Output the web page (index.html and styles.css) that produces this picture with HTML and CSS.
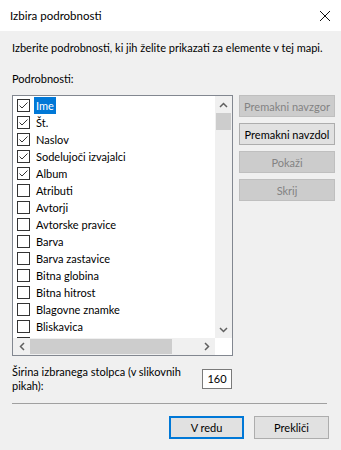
FILE: index.html
```html
<!DOCTYPE html>
<html>
<head>
<meta charset="utf-8">
<link rel="stylesheet" href="styles.css">
</head>
<body>
<div class="dialog">
  <div class="titlebar">
    <span class="title">Izbira podrobnosti</span>
    <svg class="close" width="12" height="12" viewBox="0 0 12 12"><path d="M1 1L11 11M11 1L1 11" stroke="#111" stroke-width="1" fill="none"/></svg>
  </div>
  <div class="content">
    <p class="desc">Izberite podrobnosti, ki jih želite prikazati za elemente v tej mapi.</p>
    <div class="label">Podrobnosti:</div>
    <div class="main">
      <div class="listbox">
        <div class="listarea">
          <div class="rows">
            <div class="row"><span class="cb on"><svg width="11" height="11" viewBox="0 0 11 11"><path d="M1.5 5.5L4 8L9.5 2.5" stroke="#333" stroke-width="1" fill="none"/></svg></span><span class="txt sel">Ime</span></div>
            <div class="row"><span class="cb on"><svg width="11" height="11" viewBox="0 0 11 11"><path d="M1.5 5.5L4 8L9.5 2.5" stroke="#333" stroke-width="1" fill="none"/></svg></span><span class="txt">Št.</span></div>
            <div class="row"><span class="cb on"><svg width="11" height="11" viewBox="0 0 11 11"><path d="M1.5 5.5L4 8L9.5 2.5" stroke="#333" stroke-width="1" fill="none"/></svg></span><span class="txt">Naslov</span></div>
            <div class="row"><span class="cb on"><svg width="11" height="11" viewBox="0 0 11 11"><path d="M1.5 5.5L4 8L9.5 2.5" stroke="#333" stroke-width="1" fill="none"/></svg></span><span class="txt">Sodelujoči izvajalci</span></div>
            <div class="row"><span class="cb on"><svg width="11" height="11" viewBox="0 0 11 11"><path d="M1.5 5.5L4 8L9.5 2.5" stroke="#333" stroke-width="1" fill="none"/></svg></span><span class="txt">Album</span></div>
            <div class="row"><span class="cb"></span><span class="txt">Atributi</span></div>
            <div class="row"><span class="cb"></span><span class="txt">Avtorji</span></div>
            <div class="row"><span class="cb"></span><span class="txt">Avtorske pravice</span></div>
            <div class="row"><span class="cb"></span><span class="txt">Barva</span></div>
            <div class="row"><span class="cb"></span><span class="txt">Barva zastavice</span></div>
            <div class="row"><span class="cb"></span><span class="txt">Bitna globina</span></div>
            <div class="row"><span class="cb"></span><span class="txt">Bitna hitrost</span></div>
            <div class="row"><span class="cb"></span><span class="txt">Blagovne znamke</span></div>
            <div class="row"><span class="cb"></span><span class="txt">Bliskavica</span></div>
            <div class="row"><span class="cb"></span></div>
          </div>
          <div class="vscroll">
            <div class="arrow"><svg width="9" height="6" viewBox="0 0 9 6"><path d="M1 5L4.5 1.5L8 5" stroke="#606060" stroke-width="1.5" fill="none"/></svg></div>
            <div class="vtrack"><div class="vthumb"></div></div>
            <div class="arrow"><svg width="9" height="6" viewBox="0 0 9 6"><path d="M1 1L4.5 4.5L8 1" stroke="#606060" stroke-width="1.5" fill="none"/></svg></div>
          </div>
        </div>
        <div class="hbar">
          <div class="hscroll">
            <div class="harrow"><svg width="6" height="9" viewBox="0 0 6 9"><path d="M5 1L1.5 4.5L5 8" stroke="#606060" stroke-width="1.5" fill="none"/></svg></div>
            <div class="htrack"><div class="hthumb"></div></div>
            <div class="harrow"><svg width="6" height="9" viewBox="0 0 6 9"><path d="M1 1L4.5 4.5L1 8" stroke="#606060" stroke-width="1.5" fill="none"/></svg></div>
          </div>
          <div class="corner"></div>
        </div>
      </div>
      <div class="side">
        <button class="btn dis">Premakni navzgor</button>
        <button class="btn">Premakni navzdol</button>
        <button class="btn dis">Pokaži</button>
        <button class="btn dis">Skrij</button>
      </div>
    </div>
    <div class="widthrow">
      <div class="wlabel">Širina izbranega stolpca (v slikovnih pikah):</div>
      <div class="winput">160</div>
    </div>
    <div class="sep"></div>
    <div class="footer">
      <button class="btn fbtn def">V redu</button>
      <button class="btn fbtn">Prekliči</button>
    </div>
  </div>
</div>
</body>
</html>
```

FILE: styles.css
```css
* { box-sizing: border-box; }
html, body { margin: 0; padding: 0; }
body {
  width: 341px;
  height: 450px;
  background: #f0f0f0;
  font-family: Lato, "Noto Sans", sans-serif;
  font-size: 11px;
  color: #000;
  overflow: hidden;
}
.dialog { width: 341px; height: 450px; }
.titlebar {
  height: 31px;
  background: #fff;
  display: flex;
  align-items: center;
  justify-content: space-between;
  padding: 0 10px 0 10px;
}
.title { font-size: 11.5px; }
.content { padding: 0 12px; }
.desc { margin: 0; padding-top: 9px; height: 40px; line-height: 16px; white-space: nowrap; }
.label { height: 24px; line-height: 16px; }
.main { display: flex; gap: 6px; align-items: flex-start; }
.listbox {
  flex: none;
  width: 221px;
  height: 261px;
  border: 1px solid #828790;
  background: #fff;
  display: flex;
  flex-direction: column;
}
.listarea { display: flex; height: 242px; overflow: hidden; }
.rows { flex: 1; overflow: hidden; padding-top: 1px; }
.row { height: 17px; display: flex; align-items: center; padding-left: 4px; }
.cb {
  width: 13px; height: 13px;
  border: 1px solid #333;
  background: #fff;
  display: flex; align-items: center; justify-content: center;
  flex: none;
}
.txt { margin-left: 4px; padding: 0 2px; height: 17px; line-height: 17px; white-space: nowrap; }
.txt.sel { background: #0078d7; color: #fff; }
.vscroll { width: 17px; background: #f0f0f0; display: flex; flex-direction: column; flex: none; }
.arrow { height: 17px; display: flex; align-items: center; justify-content: center; }
.vtrack { flex: 1; padding: 0 1px; }
.vthumb { height: 17px; background: #cdcdcd; }
.hbar { display: flex; height: 17px; }
.hscroll { flex: 1; background: #f0f0f0; display: flex; }
.harrow { width: 17px; display: flex; align-items: center; justify-content: center; }
.htrack { flex: 1; padding: 1px 0; }
.hthumb { width: 142px; height: 15px; background: #cdcdcd; }
.corner { width: 17px; background: #fff; }
.side { flex: none; display: flex; flex-direction: column; gap: 6px; }
.btn {
  font-family: inherit;
  font-size: 11px;
  height: 22px;
  width: 96px;
  padding: 0;
  background: #e1e1e1;
  border: 1px solid #adadad;
  color: #000;
  white-space: nowrap;
}
.btn.dis { background: #cccccc; border-color: #bfbfbf; color: #838383; }
.widthrow { display: flex; align-items: center; margin-top: 9px; }
.wlabel { width: 190px; line-height: 14px; }
.winput {
  width: 30px; height: 20px;
  border: 1px solid #7a7a7a;
  background: #fff;
  text-align: center;
  line-height: 18px;
}
.sep { height: 1px; background: #a0a0a0; margin-top: 10px; width: 315px; }
.footer { display: flex; justify-content: flex-end; gap: 10px; margin-top: 12px; }
.fbtn { width: 75px; height: 23px; }
.fbtn.def { border: 2px solid #0078d7; }
```
